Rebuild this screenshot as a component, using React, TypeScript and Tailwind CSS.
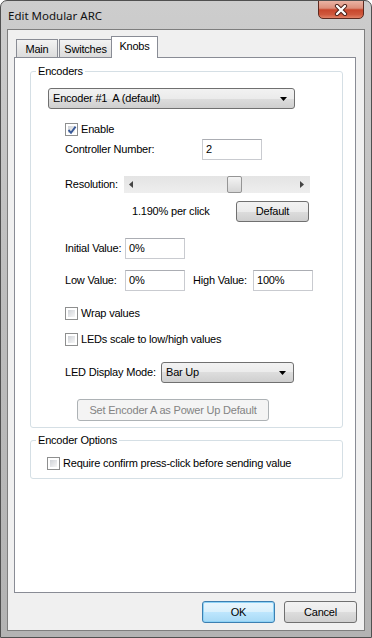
import React from 'react';

const btnFace = 'bg-[linear-gradient(#f2f2f2,#ebebeb_50%,#dddddd_50%,#cfcfcf)]';

const CheckBox: React.FC<{ checked?: boolean }> = ({ checked }) => (
  <span className="relative flex w-[13px] h-[13px] shrink-0 border border-[#8e8f8f] bg-white p-[2px]">
    <span className="flex-1 bg-linear-to-br from-[#cfd2d7] to-[#f7f7f7]" />
    {checked && (
      <svg className="absolute left-[1px] top-[1px]" width="10" height="10" viewBox="0 0 10 10">
        <path d="M1.5 5 L4 7.8 L8.6 1.6" fill="none" stroke="#3a5a98" strokeWidth="1.9" />
      </svg>
    )}
  </span>
);

const TextBox: React.FC<{ value: string; w: string }> = ({ value, w }) => (
  <div className={`${w} h-[21px] border border-[#c9cbd0] border-t-[#abadb3] bg-white flex items-center pl-[3px]`}>
    {value}
  </div>
);

const DropDown: React.FC<{ value: string; w: string }> = ({ value, w }) => (
  <div className={`${w} h-[21px] border border-[#707070] rounded-[3px] ${btnFace} flex items-center pl-[4px] pr-[7px]`}>
    <span className="whitespace-pre">{value}</span>
    <svg className="ml-auto" width="7" height="4" viewBox="0 0 7 4">
      <path d="M0 0h7L3.5 4z" fill="#000" />
    </svg>
  </div>
);

export default function App() {
  return (
    <div className="w-[372px] h-[638px] flex flex-col rounded-t-[7px] border border-[#505050] bg-linear-to-b from-[#cdcdcd] via-[#bcbcbc] to-[#b3b3b3] text-[11px] leading-[13px] tracking-[-0.2px] text-black font-['Liberation_Sans',Arial,sans-serif] overflow-hidden">
      {/* Title bar */}
      <div className="h-[28px] flex items-start shrink-0">
        <span className="pl-[7px] pt-[7px] text-[11.5px] leading-[15px] tracking-normal text-[#111] font-['Noto_Sans',sans-serif]">Edit Modular ARC</span>
        <div className="ml-auto mr-[7px] -mt-px w-[46px] h-[19px] rounded-b-[5px] border border-[#5d2a20] bg-[linear-gradient(#eab3a4,#dc8f7b_42%,#c8462c_52%,#cf583d_80%,#e18166)] flex items-center justify-center">
          <svg width="14" height="12" viewBox="0 0 14 12">
            <path d="M3 2 L11 10 M11 2 L3 10" stroke="#4a1e16" strokeWidth="4.2" strokeLinecap="round" />
            <path d="M3 2 L11 10 M11 2 L3 10" stroke="#fff" strokeWidth="2.4" strokeLinecap="round" />
          </svg>
        </div>
      </div>

      {/* Client area */}
      <div className="mx-[6px] h-[602px] shrink-0 border border-[#7e7e7e] bg-[#f0f0f0] flex flex-col pt-[6px]">
        {/* Tabs */}
        <div className="flex items-end h-[21px] pl-[8px]">
          <div className="w-[42px] h-[18px] border border-b-0 border-[#898c95] bg-linear-to-b from-[#f3f3f3] to-[#dcdcdc] flex items-center justify-center pt-[2px]">Main</div>
          <div className="ml-[1px] w-[53px] h-[18px] border border-b-0 border-[#898c95] bg-linear-to-b from-[#f3f3f3] to-[#dcdcdc] flex items-center justify-center pt-[2px]">Switches</div>
          <div className="-ml-px w-[47px] h-[22px] -mb-px relative z-10 border border-b-0 border-[#898c95] bg-white flex items-center justify-center pb-[2px]">Knobs</div>
        </div>

        {/* Tab page */}
        <div className="ml-[6px] w-[342px] h-[536px] border border-[#898c95] bg-white pl-[15px] pr-[12px] pt-[7px]">
          <fieldset className="border border-[#d5dfe5] rounded-[3px] pb-[6px]">
            <legend className="ml-[5px] px-[2px]">Encoders</legend>
            <div className="ml-[17px] mt-[10px]">
              <DropDown value="Encoder #1  A (default)" w="w-[247px]" />
            </div>
            <div className="pl-[34px] flex flex-col">
              <div className="mt-[14px] h-[13px] flex items-center gap-[3px]">
                <CheckBox checked />
                <span>Enable</span>
              </div>
              <div className="mt-[3px] flex items-center">
                <span className="w-[137px]">Controller Number:</span>
                <TextBox value="2" w="w-[60px]" />
              </div>
              <div className="mt-[16px] flex items-center">
                <span className="w-[59px]">Resolution:</span>
                <div className="w-[186px] h-[17px] bg-linear-to-b from-[#e4e4e4] to-[#eeeeee] flex items-center pl-[5px] pr-[6px]">
                  <svg width="4" height="7" viewBox="0 0 4 7"><path d="M4 0v7L0 3.5z" fill="#444" /></svg>
                  <div className="ml-[94px] w-[15px] h-[17px] rounded-[2px] border border-[#959595] bg-linear-to-b from-[#f4f4f4] to-[#d6d6d6]" />
                  <svg className="ml-auto" width="4" height="7" viewBox="0 0 4 7"><path d="M0 0v7L4 3.5z" fill="#444" /></svg>
                </div>
              </div>
              <div className="mt-[8px] flex items-center">
                <span className="ml-[67px] w-[104px]">1.190% per click</span>
                <div className={`w-[73px] h-[21px] border border-[#707070] rounded-[3px] ${btnFace} flex items-center justify-center`}>Default</div>
              </div>
              <div className="mt-[16px] flex items-center">
                <span className="w-[60px]">Initial Value:</span>
                <TextBox value="0%" w="w-[60px]" />
              </div>
              <div className="mt-[11px] flex items-center">
                <span className="w-[60px]">Low Value:</span>
                <TextBox value="0%" w="w-[60px]" />
                <span className="ml-[8px] w-[60px]">High Value:</span>
                <TextBox value="100%" w="w-[60px]" />
              </div>
              <div className="mt-[16px] h-[13px] flex items-center gap-[3px]">
                <CheckBox />
                <span>Wrap values</span>
              </div>
              <div className="mt-[13px] h-[13px] flex items-center gap-[3px]">
                <CheckBox />
                <span>LEDs scale to low/high values</span>
              </div>
              <div className="mt-[16px] flex items-center">
                <span className="w-[96px]">LED Display Mode:</span>
                <DropDown value="Bar Up" w="w-[133px]" />
              </div>
              <div className="mt-[16px] ml-[12px] w-[192px] h-[22px] border border-[#adb2b5] rounded-[3px] bg-[#f4f4f4] text-[#838383] flex items-center justify-center">
                Set Encoder A as Power Up Default
              </div>
            </div>
          </fieldset>

          <fieldset className="mt-[6px] border border-[#d5dfe5] rounded-[3px] pb-[8px]">
            <legend className="ml-[5px] px-[2px]">Encoder Options</legend>
            <div className="ml-[16px] mt-[10px] h-[13px] flex items-center gap-[3px]">
              <CheckBox />
              <span>Require confirm press-click before sending value</span>
            </div>
          </fieldset>
        </div>

        {/* Dialog buttons */}
        <div className="mt-[8px] flex justify-end gap-[9px] pr-[7px]">
          <div className="w-[73px] h-[22px] border border-[#3c7fb1] rounded-[3px] shadow-[inset_0_0_0_1px_#8fd3f6] bg-[linear-gradient(#eaf6fd,#d9f0fc_50%,#bee6fd_50%,#a7d9f5)] flex items-center justify-center">OK</div>
          <div className={`w-[73px] h-[22px] border border-[#707070] rounded-[3px] ${btnFace} flex items-center justify-center`}>Cancel</div>
        </div>
      </div>
    </div>
  );
}
